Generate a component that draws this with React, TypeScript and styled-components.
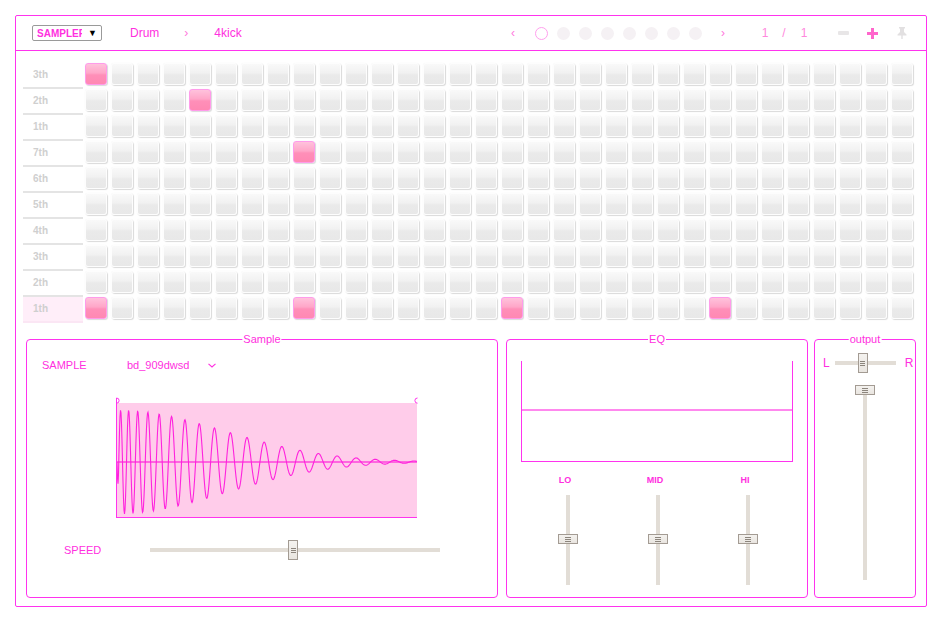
import React, { useMemo } from "react";
import styled, { createGlobalStyle } from "styled-components";

const MAG = "#ff33ee";
const TXT = "#ff2fe0";

const Global = createGlobalStyle`
  html, body { margin: 0; padding: 0; background: #fff; }
  body { font-family: "Liberation Sans", Arial, sans-serif; }
  * { box-sizing: border-box; }
`;

const Frame = styled.div`
  margin: 15px;
  width: 912px;
  height: 592px;
  border: 1px solid ${MAG};
  border-radius: 2px;
  display: flex;
  flex-direction: column;
`;

const Header = styled.div`
  height: 35px;
  border-bottom: 1px solid ${MAG};
  display: flex;
  align-items: center;
  padding-left: 16px;
  padding-right: 13px;
`;

const Select = styled.div`
  width: 70px;
  height: 16px;
  border: 1px solid #9a9a9a;
  border-radius: 2px;
  display: flex;
  align-items: center;
  padding-left: 4px;
  gap: 6px;
  background: #fff;
`;

const SelectText = styled.span`
  width: 45px;
  overflow: hidden;
  white-space: nowrap;
  font-size: 10px;
  font-weight: bold;
  color: ${TXT};
`;

const SelectArrow = styled.span`
  font-size: 9px;
  color: #000;
`;

const Crumb = styled.span<{ $ml: number; $light?: boolean }>`
  margin-left: ${(p) => p.$ml}px;
  font-size: 12px;
  color: ${(p) => (p.$light ? "#ff77dd" : TXT)};
`;

const Nav = styled.div`
  margin-left: auto;
  display: flex;
  align-items: center;
`;

const Slot = styled.div<{ $w: number; $ml?: number; $color?: string }>`
  width: ${(p) => p.$w}px;
  margin-left: ${(p) => p.$ml ?? 0}px;
  display: flex;
  justify-content: center;
  align-items: center;
  font-size: 12px;
  color: ${(p) => p.$color ?? "#ff88dd"};
`;

const Dot = styled.div<{ $on?: boolean }>`
  width: 13px;
  height: 13px;
  border-radius: 50%;
  background: ${(p) => (p.$on ? "#fff" : "#f5f1f4")};
  border: ${(p) => (p.$on ? "1.5px solid #ffa0ee" : "none")};
`;

const GridArea = styled.div`
  padding: 12px 0 0 7px;
  display: flex;
  flex-direction: column;
`;

const Row = styled.div`
  display: flex;
  height: 26px;
`;

const Label = styled.div<{ $sel?: boolean }>`
  width: 60px;
  height: 26px;
  margin-right: 2px;
  border-bottom: 2px solid ${(p) => (p.$sel ? "#fbe6f4" : "#e4e4e4")};
  background: ${(p) => (p.$sel ? "#ffeef9" : "transparent")};
  padding-left: 10px;
  display: flex;
  align-items: center;
  padding-bottom: 1px;
  font-size: 10px;
  font-weight: bold;
  color: #cfcfcf;
`;

const Cells = styled.div`
  display: flex;
  gap: 4px;
`;

const Cell = styled.div<{ $on?: boolean }>`
  width: 22px;
  height: 22px;
  border-radius: 3px;
  border: 1px solid ${(p) => (p.$on ? "#ff9bea" : "#fdfdfd")};
  background: ${(p) =>
    p.$on
      ? "linear-gradient(180deg, #ffc2dc 0%, #ffa6c8 45%, #ff8fb8 55%, #ff88b3 100%)"
      : "linear-gradient(180deg, #f9f9f9 0%, #f1f1f1 45%, #eaeaea 55%, #e8e8e8 100%)"};
  box-shadow: 1px 1px 1px rgba(0, 0, 0, 0.14), 0 0 1px rgba(0, 0, 0, 0.08);
`;

const Panels = styled.div`
  margin-top: 16px;
  padding-left: 10px;
  display: flex;
`;

const Panel = styled.div<{ $w: number; $ml?: number }>`
  position: relative;
  width: ${(p) => p.$w}px;
  height: 259px;
  margin-left: ${(p) => p.$ml ?? 0}px;
  border: 1px solid ${MAG};
  border-radius: 4px;
  display: flex;
  flex-direction: column;
`;

const Legend = styled.span`
  position: absolute;
  top: -8px;
  left: 50%;
  transform: translateX(-50%);
  background: #fff;
  padding: 0 1px;
  font-size: 11px;
  line-height: 14px;
  color: ${TXT};
`;

const SampleHead = styled.div`
  margin-top: 15px;
  padding-left: 15px;
  height: 20px;
  display: flex;
  align-items: center;
  font-size: 11px;
  color: ${TXT};
`;

const HeadLabel = styled.span<{ $w: number }>`
  width: ${(p) => p.$w}px;
`;

const Chevron = styled.svg`
  margin-left: 19px;
`;

const WaveWrap = styled.div`
  margin-top: 20px;
  margin-left: 87px;
  height: 124px;
`;

const SpeedRow = styled.div`
  margin-top: 20px;
  padding-left: 37px;
  height: 22px;
  display: flex;
  align-items: center;
  font-size: 11px;
  color: ${TXT};
`;

const HTrack = styled.div<{ $w: number }>`
  position: relative;
  width: ${(p) => p.$w}px;
  height: 4px;
  background: #e2ddd6;
`;

const Thumb = styled.div<{ $vertical?: boolean }>`
  position: absolute;
  width: ${(p) => (p.$vertical ? 20 : 10)}px;
  height: ${(p) => (p.$vertical ? 10 : 20)}px;
  border: 1px solid #a39b93;
  background: linear-gradient(180deg, #f4f2ef, #e9e5e0);
  display: flex;
  flex-direction: column;
  align-items: center;
  justify-content: center;
  gap: 1px;
`;

const Grip = styled.i<{ $w: number }>`
  display: block;
  width: ${(p) => p.$w}px;
  height: 1px;
  background: #8c857d;
`;

const EqBox = styled.div`
  margin: 21px 0 0 14px;
  width: 272px;
  height: 101px;
  border: 1px solid ${MAG};
  border-top: none;
  display: flex;
  flex-direction: column;
`;

const EqLine = styled.div`
  margin-top: 48px;
  height: 2px;
  background: #ff88ee;
`;

const EqCols = styled.div`
  margin-top: 12px;
  margin-left: 16px;
  display: grid;
  grid-template-columns: repeat(3, 90px);
`;

const EqCol = styled.div`
  display: flex;
  flex-direction: column;
  align-items: center;
`;

const EqLabel = styled.span`
  height: 12px;
  line-height: 12px;
  padding-right: 6px;
  font-size: 9px;
  font-weight: bold;
  color: ${TXT};
`;

const VTrack = styled.div<{ $h: number; $mt: number }>`
  position: relative;
  margin-top: ${(p) => p.$mt}px;
  width: 4px;
  height: ${(p) => p.$h}px;
  background: #e2ddd6;
  display: flex;
  justify-content: center;
`;

const OutRow = styled.div`
  margin-top: 13px;
  height: 20px;
  padding-left: 8px;
  display: flex;
  align-items: center;
  font-size: 12px;
  color: ${TXT};
`;

const OutTrackWrap = styled.div`
  margin: 0 9px 0 5px;
  display: flex;
  align-items: center;
`;

const OutV = styled.div`
  margin-top: 12px;
  display: flex;
  justify-content: center;
`;

const VSlider: React.FC<{ h: number; mt: number; pos: number }> = ({ h, mt, pos }) => (
  <VTrack $h={h} $mt={mt}>
    <Thumb $vertical style={{ top: pos }}>
      <Grip $w={6} />
      <Grip $w={6} />
      <Grip $w={6} />
    </Thumb>
  </VTrack>
);

const HSlider: React.FC<{ w: number; pos: number }> = ({ w, pos }) => (
  <HTrack $w={w}>
    <Thumb style={{ left: pos, top: -8 }}>
      <Grip $w={5} />
      <Grip $w={5} />
      <Grip $w={5} />
    </Thumb>
  </HTrack>
);

const LABELS = ["3th", "2th", "1th", "7th", "6th", "5th", "4th", "3th", "2th", "1th"];
const ACTIVE = new Set(["0-0", "1-4", "3-8", "9-0", "9-8", "9-16", "9-24"]);

function Waveform() {
  const d = useMemo(() => {
    const pts: string[] = [];
    const cy = 67;
    let phase = -Math.PI / 2;
    const dx = 0.5;
    for (let x = 0; x <= 300; x += dx) {
      const period = 20 - 13 * Math.exp(-x / 90);
      let a = 52 * Math.exp(-Math.pow(x / 150, 2));
      if (x < 1.5) a *= x / 1.5;
      const y = cy - a * Math.sin(phase);
      pts.push(`${(x + 3).toFixed(1)},${y.toFixed(2)}`);
      phase += (2 * Math.PI * dx) / period;
    }
    return "M" + pts.join(" L");
  }, []);
  return (
    <svg width={306} height={124} viewBox="0 0 306 124">
      <rect x={2} y={8} width={301} height={114} fill="#ffccea" />
      <line x1={3} y1={67} x2={303} y2={67} stroke="#ff44dd" strokeWidth={1.6} />
      <path d={d} fill="none" stroke="#ff22dd" strokeWidth={1.1} />
      <line x1={2.5} y1={3} x2={2.5} y2={122.5} stroke={MAG} strokeWidth={1} />
      <line x1={2} y1={122.5} x2={303} y2={122.5} stroke={MAG} strokeWidth={1} />
      <path d="M2.5 3 a2.6 2.6 0 0 1 0 5.2" fill="none" stroke={MAG} strokeWidth={1} />
      <path d="M303.5 3 a2.6 2.6 0 0 0 0 5.2" fill="none" stroke={MAG} strokeWidth={1} />
    </svg>
  );
}

export default function App() {
  return (
    <>
      <Global />
      <Frame>
        <Header>
          <Select>
            <SelectText>SAMPLER</SelectText>
            <SelectArrow>▼</SelectArrow>
          </Select>
          <Crumb $ml={28}>Drum</Crumb>
          <Crumb $ml={25} $light>
            ›
          </Crumb>
          <Crumb $ml={26}>4kick</Crumb>
          <Nav>
            <Slot $w={22} $color="#ff77dd">‹</Slot>
            {Array.from({ length: 8 }).map((_, i) => (
              <Slot key={i} $w={22} $ml={i === 0 ? 6 : 0}>
                <Dot $on={i === 0} />
              </Slot>
            ))}
            <Slot $w={22} $ml={6} $color="#ff77dd">›</Slot>
            <Slot $w={14} $ml={24}>1</Slot>
            <Slot $w={14} $ml={5}>/</Slot>
            <Slot $w={14} $ml={6}>1</Slot>
            <Slot $w={22} $ml={21}>
              <svg width="11" height="4" viewBox="0 0 11 4">
                <rect width="11" height="4" rx="1" fill="#e8e6e7" />
              </svg>
            </Slot>
            <Slot $w={22} $ml={7}>
              <svg width="11" height="11" viewBox="0 0 11 11">
                <path d="M4 0h3v4h4v3H7v4H4V7H0V4h4z" fill="#ff66cc" />
              </svg>
            </Slot>
            <Slot $w={22} $ml={8}>
              <svg width="10" height="12" viewBox="0 0 10 12">
                <path d="M2 0h6v1.5H7v3.5l2.5 2.5V8.5H5.7V12H4.3V8.5H0.5V7.5L3 5V1.5H2z" fill="#e2e0e1" />
              </svg>
            </Slot>
          </Nav>
        </Header>

        <GridArea>
          {LABELS.map((l, r) => (
            <Row key={r}>
              <Label $sel={r === 9}>{l}</Label>
              <Cells>
                {Array.from({ length: 32 }).map((_, c) => (
                  <Cell key={c} $on={ACTIVE.has(`${r}-${c}`)} />
                ))}
              </Cells>
            </Row>
          ))}
        </GridArea>

        <Panels>
          <Panel $w={472}>
            <Legend>Sample</Legend>
            <SampleHead>
              <HeadLabel $w={85}>SAMPLE</HeadLabel>
              <span>bd_909dwsd</span>
              <Chevron width="8" height="5" viewBox="0 0 8 5">
                <path d="M0.5 0.8 L4 4 L7.5 0.8" fill="none" stroke={TXT} strokeWidth="1.1" />
              </Chevron>
            </SampleHead>
            <WaveWrap>
              <Waveform />
            </WaveWrap>
            <SpeedRow>
              <HeadLabel $w={86}>SPEED</HeadLabel>
              <HSlider w={290} pos={138} />
            </SpeedRow>
          </Panel>

          <Panel $w={302} $ml={8}>
            <Legend>EQ</Legend>
            <EqBox>
              <EqLine />
            </EqBox>
            <EqCols>
              {["LO", "MID", "HI"].map((n) => (
                <EqCol key={n}>
                  <EqLabel>{n}</EqLabel>
                  <VSlider h={90} mt={9} pos={39} />
                </EqCol>
              ))}
            </EqCols>
          </Panel>

          <Panel $w={102} $ml={6}>
            <Legend>output</Legend>
            <OutRow>
              <span>L</span>
              <OutTrackWrap>
                <HSlider w={61} pos={23} />
              </OutTrackWrap>
              <span>R</span>
            </OutRow>
            <OutV>
              <VSlider h={190} mt={5} pos={-5} />
            </OutV>
          </Panel>
        </Panels>
      </Frame>
    </>
  );
}
